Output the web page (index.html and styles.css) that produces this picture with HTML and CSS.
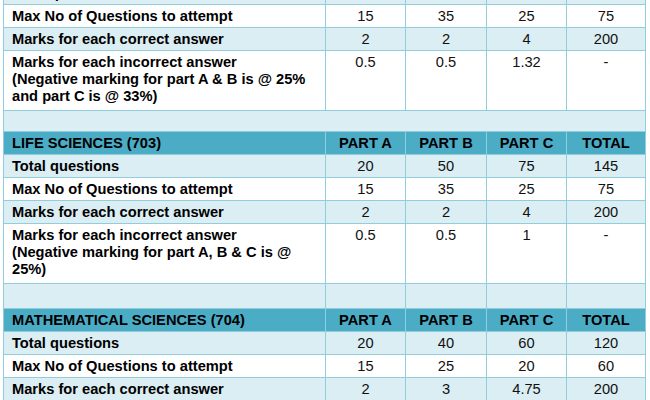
FILE: index.html
```html
<!DOCTYPE html>
<html>
<head>
<meta charset="utf-8">
<link rel="stylesheet" href="styles.css">
</head>
<body>
<table class="grid">
  <colgroup>
    <col class="c-label"><col class="c-a"><col class="c-b"><col class="c-c"><col class="c-t">
  </colgroup>
  <tbody>
    <tr class="light">
      <td class="label">Total questions</td><td>20</td><td>50</td><td>75</td><td>145</td>
    </tr>
    <tr class="white">
      <td class="label">Max No of Questions to attempt</td><td>15</td><td>35</td><td>25</td><td>75</td>
    </tr>
    <tr class="light">
      <td class="label">Marks for each correct answer</td><td>2</td><td>2</td><td>4</td><td>200</td>
    </tr>
    <tr class="white tall">
      <td class="label">Marks for each incorrect answer<br>(Negative marking for part A &amp; B is @ 25%<br>and part C is @ 33%)</td><td>0.5</td><td>0.5</td><td>1.32</td><td>-</td>
    </tr>
    <tr class="light spacer">
      <td colspan="5"></td>
    </tr>
    <tr class="head">
      <td class="label">LIFE SCIENCES (703)</td><td>PART A</td><td>PART B</td><td>PART C</td><td>TOTAL</td>
    </tr>
    <tr class="light">
      <td class="label">Total questions</td><td>20</td><td>50</td><td>75</td><td>145</td>
    </tr>
    <tr class="white">
      <td class="label">Max No of Questions to attempt</td><td>15</td><td>35</td><td>25</td><td>75</td>
    </tr>
    <tr class="light">
      <td class="label">Marks for each correct answer</td><td>2</td><td>2</td><td>4</td><td>200</td>
    </tr>
    <tr class="white tall">
      <td class="label">Marks for each incorrect answer<br>(Negative marking for part A, B &amp; C is @<br>25%)</td><td>0.5</td><td>0.5</td><td>1</td><td>-</td>
    </tr>
    <tr class="light spacer spacer2">
      <td></td><td></td><td></td><td></td><td></td>
    </tr>
    <tr class="head">
      <td class="label">MATHEMATICAL SCIENCES (704)</td><td>PART A</td><td>PART B</td><td>PART C</td><td>TOTAL</td>
    </tr>
    <tr class="light">
      <td class="label">Total questions</td><td>20</td><td>40</td><td>60</td><td>120</td>
    </tr>
    <tr class="white">
      <td class="label">Max No of Questions to attempt</td><td>15</td><td>25</td><td>20</td><td>60</td>
    </tr>
    <tr class="light">
      <td class="label">Marks for each correct answer</td><td>2</td><td>3</td><td>4.75</td><td>200</td>
    </tr>
  </tbody>
</table>
</body>
</html>
```

FILE: styles.css
```css
html, body {
  margin: 0;
  padding: 0;
  background: #ffffff;
  overflow: hidden;
}

.grid {
  border-collapse: collapse;
  table-layout: fixed;
  width: 642px;
  margin: -19px 0 0 3px;
  font-family: "Liberation Sans", Arial, sans-serif;
  font-size: 14.67px;
  line-height: 17px;
  color: #111111;
}

.c-label { width: 322px; }
.c-a { width: 80px; }
.c-b { width: 81px; }
.c-c { width: 80px; }
.c-t { width: 79px; }

.grid td {
  border: 1px solid #92cddc;
  padding: 3px 8px 2px;
  vertical-align: top;
  text-align: center;
  white-space: nowrap;
}

.grid td.label {
  text-align: left;
  font-weight: bold;
  color: #000000;
}

.light td { background: #daeef3; }
.white td { background: #ffffff; }

.tall td { padding-bottom: 5px; }

.spacer td { height: 20px; padding: 0; }
.spacer2 td { height: 24px; }

.head td {
  background: #4bacc6;
  font-weight: bold;
  color: #000000;
}
```
